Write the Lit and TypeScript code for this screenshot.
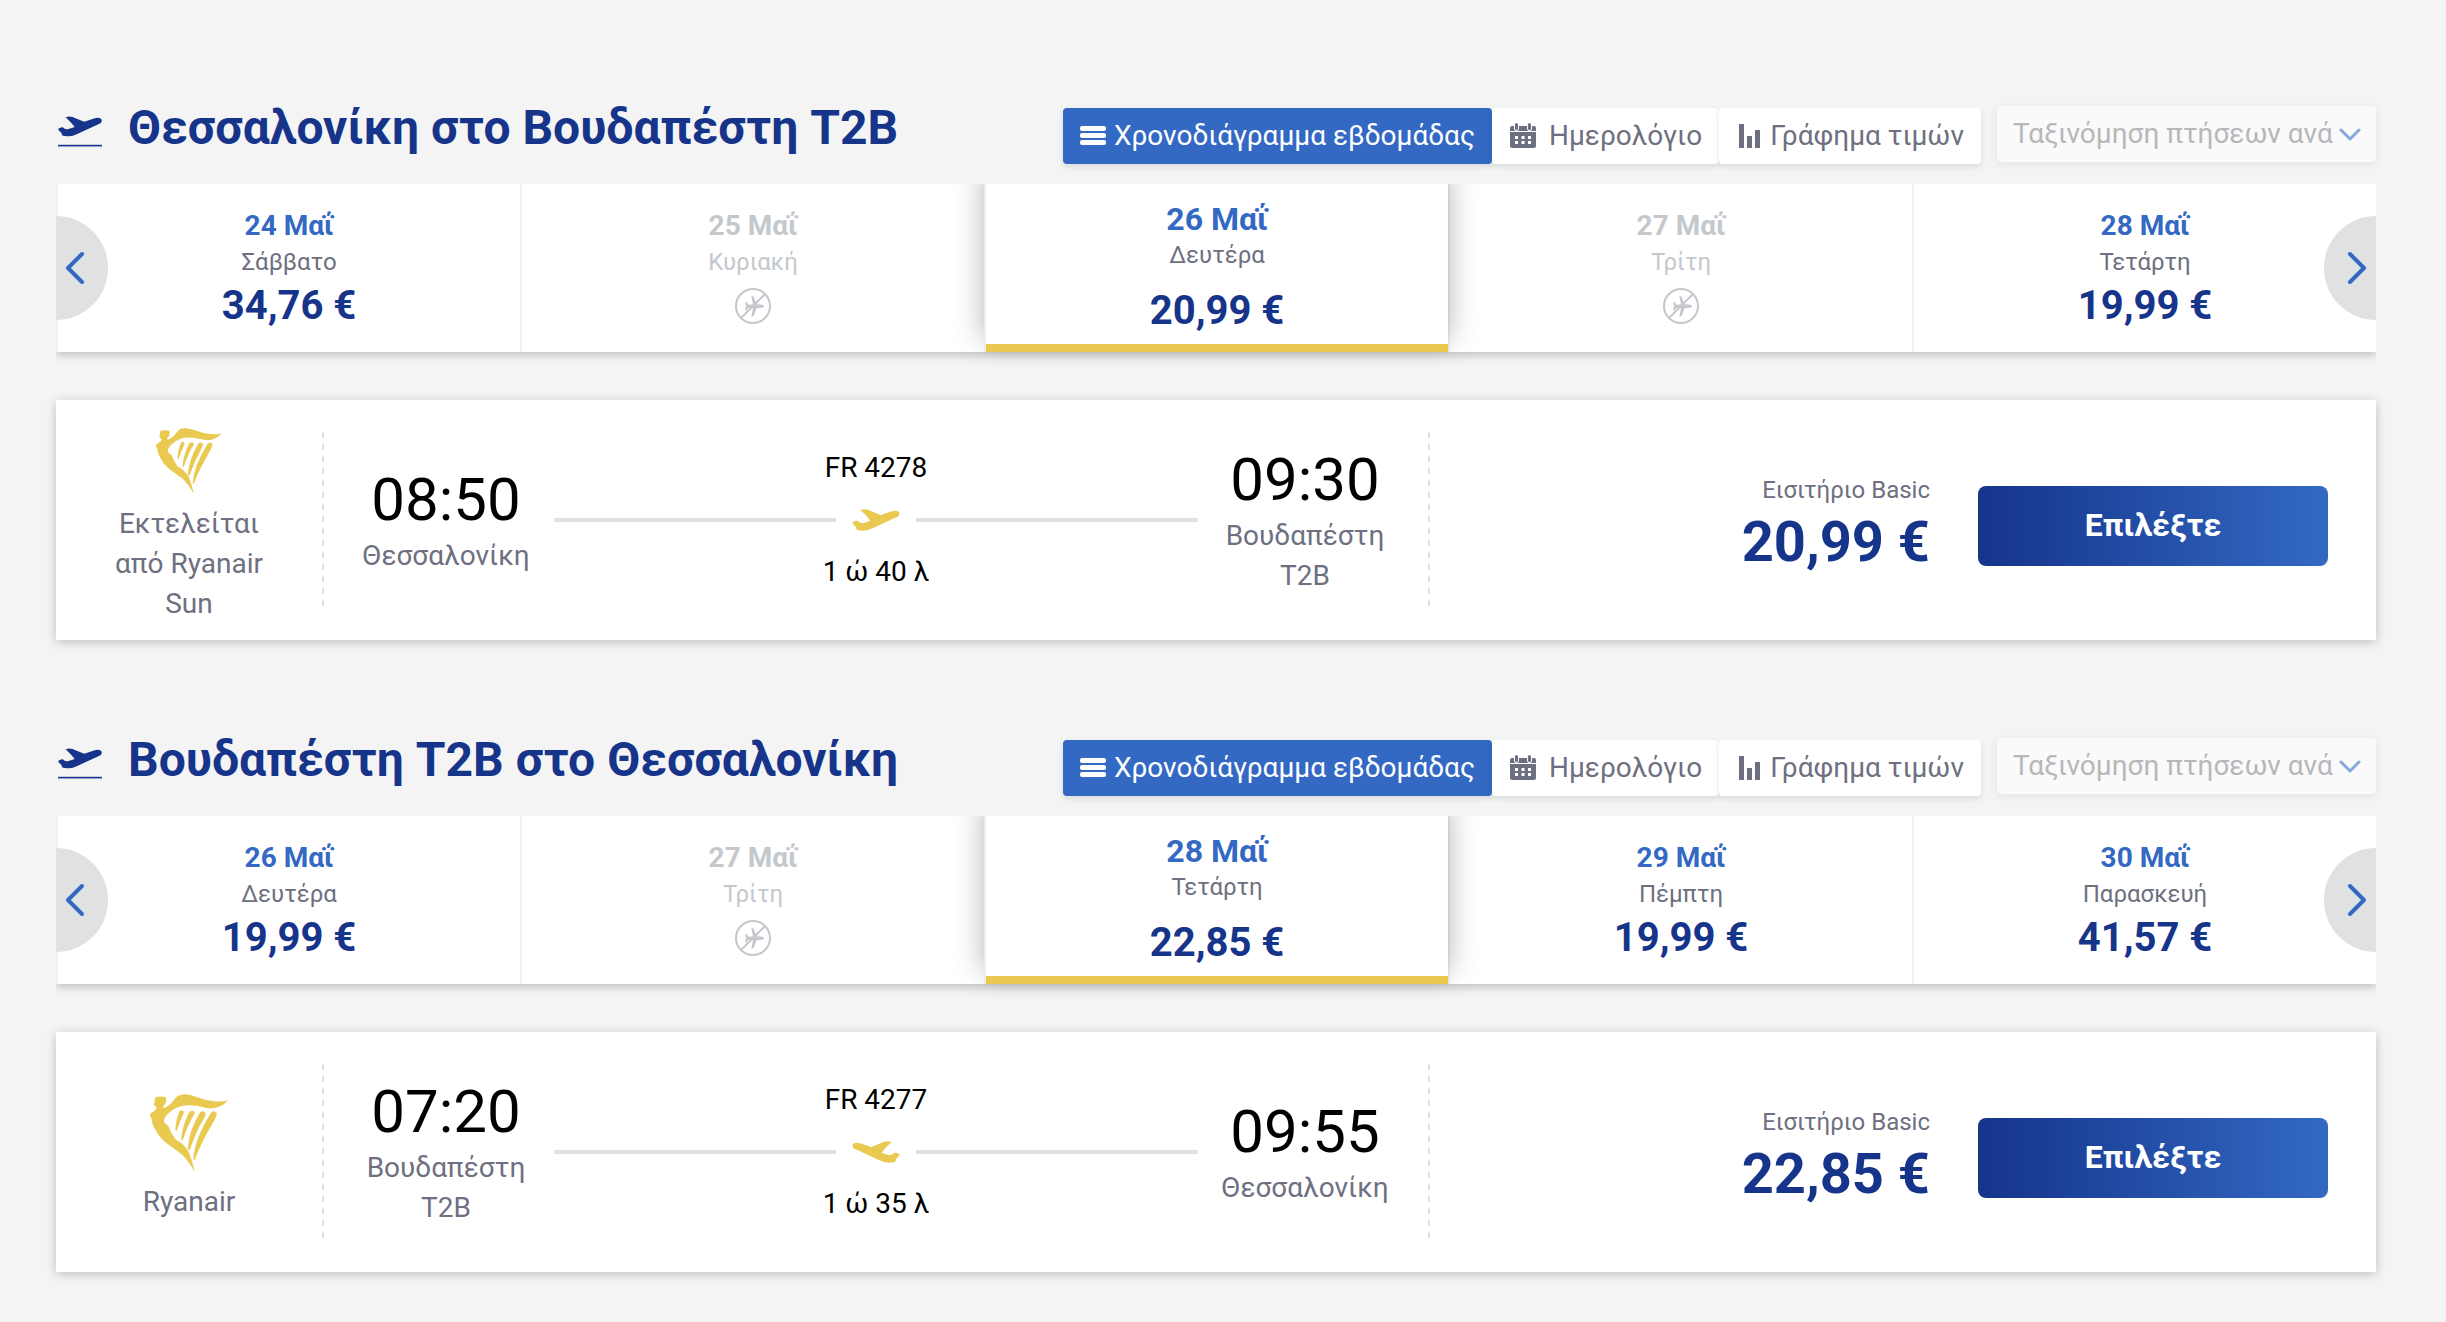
import { LitElement, html, css, svg } from "lit";
import { customElement, property } from "lit/decorators.js";
import { classMap } from "lit/directives/class-map.js";

interface DayFare {
  date: string;
  weekday: string;
  fare?: string;
  selected?: boolean;
}

interface Stop {
  time: string;
  city: string[];
}

interface Journey {
  id: string;
  title: string;
  days: DayFare[];
  carrier: string;
  longCarrier?: boolean;
  flight: string;
  duration: string;
  inbound?: boolean;
  from: Stop;
  to: Stop;
  fare: string;
}

const JOURNEYS: Journey[] = [
  {
    id: "outbound",
    title: "Θεσσαλονίκη στο Βουδαπέστη T2B",
    days: [
      { date: "24 Μαΐ", weekday: "Σάββατο", fare: "34,76 €" },
      { date: "25 Μαΐ", weekday: "Κυριακή" },
      { date: "26 Μαΐ", weekday: "Δευτέρα", fare: "20,99 €", selected: true },
      { date: "27 Μαΐ", weekday: "Τρίτη" },
      { date: "28 Μαΐ", weekday: "Τετάρτη", fare: "19,99 €" },
    ],
    carrier: "Εκτελείται από Ryanair Sun",
    longCarrier: true,
    flight: "FR 4278",
    duration: "1 ώ 40 λ",
    from: { time: "08:50", city: ["Θεσσαλονίκη"] },
    to: { time: "09:30", city: ["Βουδαπέστη", "T2B"] },
    fare: "20,99 €",
  },
  {
    id: "inbound",
    title: "Βουδαπέστη T2B στο Θεσσαλονίκη",
    days: [
      { date: "26 Μαΐ", weekday: "Δευτέρα", fare: "19,99 €" },
      { date: "27 Μαΐ", weekday: "Τρίτη" },
      { date: "28 Μαΐ", weekday: "Τετάρτη", fare: "22,85 €", selected: true },
      { date: "29 Μαΐ", weekday: "Πέμπτη", fare: "19,99 €" },
      { date: "30 Μαΐ", weekday: "Παρασκευή", fare: "41,57 €" },
    ],
    carrier: "Ryanair",
    flight: "FR 4277",
    duration: "1 ώ 35 λ",
    inbound: true,
    from: { time: "07:20", city: ["Βουδαπέστη", "T2B"] },
    to: { time: "09:55", city: ["Θεσσαλονίκη"] },
    fare: "22,85 €",
  },
];

const planeShape = svg`<path d="M47 49Q58 45 68 48L104 63L136 52Q150 49 156 55Q160 62 152 68L104 90Q80 102 66 106Q48 109 37 105L34 96Q28 93 24 85Q34 77 40 80Q44 86 54 86L75 79Q62 62 47 49Z"/>`;

const takeoffIcon = html`<svg class="takeoff" viewBox="24 46 134 93" aria-hidden="true">
  ${planeShape}<rect x="24" y="133" width="134" height="5" />
</svg>`;

const harpIcon = html`<svg class="harp" viewBox="54 38 194 194" aria-hidden="true">
  <path d="M67 46Q80 43 93 46Q96 49 93 60Q91 66 87 67L88 73Q104 67 112 55Q122 39 136 39Q150 38 166 44Q190 53 213 56Q230 58 247 54Q236 67 222 71Q208 76 192 72Q168 66 150 66Q130 66 113 76Q90 91 88 106Q91 112 100 118Q106 136 118 151Q140 163 150 181Q160 205 165 231Q150 205 134 189Q120 178 100 164Q78 148 68 128Q58 112 58 99Q54 93 54 87Q60 83 68 78L70 70Q65 69 64 64Z"/>
  <path d="M127 82Q131 76 137 80Q140 84 135 92Q128 106 121 129Q117 131 117 124Q119 100 127 82Z"/>
  <path d="M151 84Q158 76 165 83Q166 88 158 99Q146 120 136 152Q133 155 132 148Q135 115 151 84Z"/>
  <path d="M178 84Q186 77 192 85Q193 91 186 102Q166 137 153 177Q149 179 148 172Q151 130 178 84Z"/>
  <path d="M206 84Q214 77 220 86Q220 94 212 107Q182 157 165 202Q162 204 162 196Q166 148 206 84Z"/>
</svg>`;

const noFlightIcon = html`<svg class="no-flight" viewBox="0 0 36 36" aria-hidden="true">
  <circle cx="18" cy="18" r="17" fill="none" stroke="currentColor" stroke-width="2" />
  <path d="M6.500 29.500L29.500 6.500" stroke="currentColor" stroke-width="2" />
  <path fill="currentColor" d="M29 18.300Q29 20 25 20L21.500 20.300L18.500 28.300L16.300 28.300L18 20.300L13.500 19.800L11.500 22.500L10.300 22.500L11 18.300L10.300 14L11.500 14L13.500 16.800L18 16.300L16.300 8.200L18.500 8.200L21.500 16.300L25 16.600Q29 16.800 29 18.300Z"/>
</svg>`;

const listIcon = html`<svg width="26" height="20" viewBox="0 0 26 20" fill="currentColor" aria-hidden="true">
  <rect y="0" width="26" height="5" rx="2" /><rect y="7" width="26" height="5" rx="2" /><rect y="14" width="26" height="5" rx="2" />
</svg>`;

const calendarIcon = html`<svg width="32" height="26" viewBox="0 0 32 26" fill="currentColor" aria-hidden="true">
  <path d="M3 3H5V5Q5 8 7.500 8Q10 8 10 5V3H18V5Q18 8 20.500 8Q23 8 23 5V3H25Q27 3 27 5V8H1V5Q1 3 3 3Z"/>
  <rect x="6" y="0" width="3" height="7" rx="1.500" /><rect x="19" y="0" width="3" height="7" rx="1.500" />
  <path fill-rule="evenodd" d="M1 9H27V23Q27 25 25 25H3Q1 25 1 23ZM6 13V16H9V13ZM12.500 13V16H15.500V13ZM19 13V16H22V13ZM6 18V21H9V18ZM12.500 18V21H15.500V18ZM19 18V21H22V18Z"/>
</svg>`;

const chartIcon = html`<svg width="26" height="24" viewBox="0 0 26 24" fill="currentColor" aria-hidden="true">
  <rect x="3" y="0" width="5" height="24" /><rect x="11" y="12" width="5" height="12" /><rect x="19" y="6" width="5" height="18" />
</svg>`;

const chevron = (points: string, w: number, h: number, weight: number) => html`<svg
  width=${w} height=${h} viewBox="0 0 ${w} ${h}" fill="none" stroke="currentColor"
  stroke-width=${weight} stroke-linecap="round" stroke-linejoin="round" aria-hidden="true">
  <polyline points=${points} />
</svg>`;

@customElement("journey-header")
class JourneyHeader extends LitElement {
  @property({ attribute: false }) journey!: Journey;

  static styles = css`
    :host { display: flex; align-items: flex-start; justify-content: space-between; min-height: 84px; }
    .title { display: flex; align-items: center; gap: 26px; margin: 0; padding-left: 2px; color: #15348a; font-size: 48px; line-height: 56px; font-weight: 700; }
    .takeoff { width: 44px; height: 31px; margin-top: 6px; fill: currentColor; }
    .tools { display: flex; gap: 16px; }
    .views { display: flex; margin-top: 8px; }
    button { display: flex; align-items: center; gap: 8px; height: 56px; padding: 0 17px; border: 0; border-radius: 4px; background: #fff; color: #6d7080; font: inherit; font-size: 28px; line-height: 40px; white-space: nowrap; box-shadow: 0 3px 6px rgba(0, 0, 0, 0.1); cursor: pointer; }
    button svg { flex: none; }
    .active { background: #3369c3; color: #fff; }
    .sort { position: relative; display: flex; align-items: center; width: 379px; height: 56px; margin-top: 6px; }
    select { appearance: none; width: 100%; height: 100%; padding: 0 40px 0 16px; border: 0; border-radius: 4px; background: #fafafa; color: #b6b7bb; opacity: 1; font: inherit; font-size: 28px; line-height: 40px; box-shadow: 0 2px 8px rgba(0, 0, 0, 0.08); }
    .sort svg { position: absolute; right: 15px; color: #86aade; pointer-events: none; }
  `;

  render() {
    return html`
      <h2 class="title">${takeoffIcon}<span>${this.journey.title}</span></h2>
      <div class="tools">
        <div class="views">
          <button type="button" class="active" aria-pressed="true">${listIcon}<span>Χρονοδιάγραμμα εβδομάδας</span></button>
          <button type="button" aria-pressed="false">${calendarIcon}<span>Ημερολόγιο</span></button>
          <button type="button" aria-pressed="false">${chartIcon}<span>Γράφημα τιμών</span></button>
        </div>
        <label class="sort">
          <select disabled aria-label="Ταξινόμηση πτήσεων ανά">
            <option>Ταξινόμηση πτήσεων ανά</option>
          </select>
          ${chevron("2,2 11,11 20,2", 22, 13, 3)}
        </label>
      </div>
    `;
  }
}

@customElement("date-carousel")
class DateCarousel extends LitElement {
  @property({ attribute: false }) days: DayFare[] = [];

  static styles = css`
    :host { display: block; position: relative; clip-path: inset(0 0 -16px 0); }
    .days { display: grid; grid-template-columns: repeat(5, 1fr); margin: 0; padding: 0; list-style: none; box-shadow: 0 2px 10px rgba(0, 0, 0, 0.26); }
    .cell { display: flex; }
    .day { display: flex; flex-direction: column; align-items: center; box-sizing: border-box; width: 100%; height: 168px; padding: 24px 0 0; border: 0; border-left: 2px solid #f2f2f3; background: #fff; color: #6d7080; font: inherit; cursor: pointer; }
    .date { color: #3369c3; font-size: 28px; line-height: 36px; font-weight: 700; }
    .weekday { font-size: 24px; line-height: 36px; }
    .fare { display: flex; align-items: center; height: 52px; color: #15348a; font-size: 40px; line-height: 52px; font-weight: 700; }
    .no-flight { width: 36px; height: 36px; }
    .empty, .empty .date, .empty .fare { color: #c4c8cd; }
    .selected { position: relative; padding-top: 17px; border-left-color: #ececed; box-shadow: 0 -12px 28px rgba(0, 0, 0, 0.3); }
    .selected .date { font-size: 32px; }
    .selected .fare { margin-top: 12px; }
    .selected::after { content: ""; position: absolute; left: 0; right: 0; bottom: 0; height: 8px; background: #eac951; }
    .arrow { position: absolute; top: 32px; display: flex; align-items: center; width: 52px; height: 104px; padding: 0 9px; border: 0; background: #dfe1e3; color: #3369c3; cursor: pointer; }
    .prev { left: 0; border-radius: 0 52px 52px 0; }
    .next { right: 0; justify-content: flex-end; border-radius: 52px 0 0 52px; }
  `;

  render() {
    return html`
      <ul class="days">
        ${this.days.map(
          (d) => html`<li class="cell">
            <button type="button" class=${classMap({ day: true, selected: !!d.selected, empty: !d.fare })} ?disabled=${!d.fare}>
              <span class="date">${d.date}</span>
              <span class="weekday">${d.weekday}</span>
              <span class="fare">${d.fare ?? noFlightIcon}</span>
            </button>
          </li>`
        )}
      </ul>
      <button type="button" class="arrow prev" aria-label="Προηγούμενες ημερομηνίες">${chevron("17,3 3,17 17,31", 20, 34, 4)}</button>
      <button type="button" class="arrow next" aria-label="Επόμενες ημερομηνίες">${chevron("3,3 17,17 3,31", 20, 34, 4)}</button>
    `;
  }
}

@customElement("flight-card")
class FlightCard extends LitElement {
  @property({ attribute: false }) journey!: Journey;

  static styles = css`
    :host { display: grid; grid-template-columns: 268fr 1106fr 946fr; min-height: 240px; margin-top: 48px; background: #fff; box-shadow: 0 2px 10px rgba(0, 0, 0, 0.22); color: #6d7080; }
    .carrier, .journey { display: flex; }
    .carrier::after, .journey::after { content: ""; flex: none; width: 2px; margin: 32px 0; background: repeating-linear-gradient(#e0e1e3 0 6px, transparent 6px 12px); }
    .brand { flex: 1; display: flex; flex-direction: column; align-items: center; justify-content: center; gap: 10px; padding: 12px 48px 0; font-size: 28px; line-height: 40px; text-align: center; }
    .harp { width: 78px; height: 78px; fill: #eac951; }
    .compact .harp { width: 66px; height: 66px; }
    .route { flex: 1; display: grid; grid-template-columns: 216px 1fr 214px; align-items: center; padding: 0 16px 0 14px; font-size: 28px; line-height: 40px; text-align: center; }
    .time { color: #000; font-size: 60px; line-height: 72px; }
    .place { display: block; }
    .leg { color: #000; }
    .track { display: flex; align-items: center; gap: 16px; height: 64px; }
    .track::before, .track::after { content: ""; flex: 1; height: 4px; background: #dfe1e3; }
    .plane { width: 48px; height: 22px; fill: #eac951; }
    .landing { transform: scaleX(-1); }
    .offer { display: flex; align-items: center; justify-content: flex-end; gap: 48px; padding: 12px 48px 0 0; }
    .amount { text-align: right; }
    .kind { font-size: 24px; line-height: 32px; }
    .fare { color: #15348a; font-size: 56px; line-height: 72px; font-weight: 700; }
    .choose { width: 350px; height: 80px; border: 0; border-radius: 8px; background: linear-gradient(90deg, #15348a, #3369c3); color: #fff; font: inherit; font-size: 32px; line-height: 36px; padding: 0 0 2px; font-weight: 700; cursor: pointer; }
  `;

  private stop(s: Stop) {
    return html`<div>
      <div class="time">${s.time}</div>
      ${s.city.map((line) => html`<span class="place">${line}</span>`)}
    </div>`;
  }

  render() {
    const j = this.journey;
    return html`
      <div class="carrier">
        <div class=${classMap({ brand: true, compact: !!j.longCarrier })}>${harpIcon}<span>${j.carrier}</span></div>
      </div>
      <div class="journey">
        <div class="route">
          ${this.stop(j.from)}
          <div class="leg">
            <div>${j.flight}</div>
            <div class="track">
              <svg class=${classMap({ plane: true, landing: !!j.inbound })} viewBox="24 46 134 62" aria-hidden="true">${planeShape}</svg>
            </div>
            <div>${j.duration}</div>
          </div>
          ${this.stop(j.to)}
        </div>
      </div>
      <div class="offer">
        <div class="amount">
          <div class="kind">Εισιτήριο Basic</div>
          <div class="fare">${j.fare}</div>
        </div>
        <button type="button" class="choose">Επιλέξτε</button>
      </div>
    `;
  }
}

@customElement("app-root")
class AppRoot extends LitElement {
  static styles = css`
    :host { display: block; box-sizing: border-box; min-height: 100vh; padding: 100px 70px 50px 56px; background: #f4f4f4; font-family: Roboto, "Noto Sans", sans-serif; }
    .list { display: grid; gap: 92px; }
  `;

  render() {
    return html`<main class="list">
      ${JOURNEYS.map(
        (j) => html`<section id=${j.id}>
          <journey-header .journey=${j}></journey-header>
          <date-carousel .days=${j.days}></date-carousel>
          <flight-card .journey=${j}></flight-card>
        </section>`
      )}
    </main>`;
  }
}
